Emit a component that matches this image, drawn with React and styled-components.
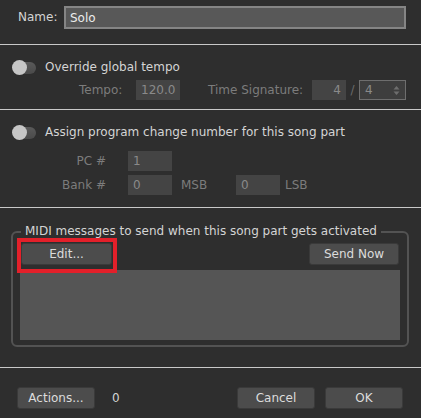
import React from "react";
import styled, { createGlobalStyle } from "styled-components";

const GlobalStyle = createGlobalStyle`
  html, body {
    margin: 0;
    padding: 0;
    background: #2e2e2e;
  }
  body {
    font-family: "DejaVu Sans", Verdana, sans-serif;
    font-size: 12px;
    color: #d4d4d4;
  }
`;

export default function App() {
  return (
    <>
      <GlobalStyle />
      <Dialog>
        <NameRow>
          <Label>Name:</Label>
          <NameInput defaultValue="Solo" />
        </NameRow>
        <Divider />

        <Section $height={64}>
          <ToggleRow>
            <Toggle />
            <span>Override global tempo</span>
          </ToggleRow>
          <FieldRow $left={79} $top={5}>
            <DimLabel $width={57}>Tempo:</DimLabel>
            <DimInput $width={44}>120.0</DimInput>
            <DimLabel $width={104} $gap={28}>Time Signature:</DimLabel>
            <DimInput $width={34} $right>4</DimInput>
            <Slash>/</Slash>
            <Spinner>
              4
              <svg width="7" height="11" viewBox="0 0 7 11">
                <path d="M3.5 1 L6.5 4.5 H0.5 Z" fill="#6e6e6e" />
                <path d="M3.5 10 L6.5 6.5 H0.5 Z" fill="#6e6e6e" />
              </svg>
            </Spinner>
          </FieldRow>
        </Section>
        <Divider />

        <Section $height={97}>
          <ToggleRow>
            <Toggle />
            <span>Assign program change number for this song part</span>
          </ToggleRow>
          <FieldRow $top={11}>
            <PcLabel>PC #</PcLabel>
            <DimInput $width={44}>1</DimInput>
          </FieldRow>
          <FieldRow $top={4}>
            <PcLabel>Bank #</PcLabel>
            <DimInput $width={44}>0</DimInput>
            <DimLabel $width={55} $gap={9}>MSB</DimLabel>
            <DimInput $width={44}>0</DimInput>
            <DimLabel $gap={5}>LSB</DimLabel>
          </FieldRow>
        </Section>
        <Divider />

        <Group>
          <Legend>MIDI messages to send when this song part gets activated</Legend>
          <GroupBar>
            <Button $width={91}>
              Edit...
              <Highlight />
            </Button>
            <Button $width={90}>Send Now</Button>
          </GroupBar>
          <MessageList />
        </Group>
        <Divider />

        <Footer>
          <Button $width={78}>Actions...</Button>
          <Count>0</Count>
          <Spacer />
          <Button $width={78}>Cancel</Button>
          <Button $width={78}>OK</Button>
        </Footer>
      </Dialog>
    </>
  );
}

const Dialog = styled.div`
  width: 421px;
  height: 418px;
  display: flex;
  flex-direction: column;
  background: #2e2e2e;
  overflow: hidden;
`;
const NameRow = styled.div`
  height: 44px;
  box-sizing: border-box;
  padding: 6px 15px 0 18px;
  display: flex;
  align-items: flex-start;
`;
const Label = styled.span`
  width: 46px;
  line-height: 23px;
  color: #d4d4d4;
`;
const NameInput = styled.input`
  flex: 1;
  height: 23px;
  box-sizing: border-box;
  border: 2px solid #858585;
  background: #585858;
  color: #ececec;
  font: inherit;
  padding: 0 4px;
  outline: none;
`;
const Divider = styled.div`
  height: 1px;
  flex-shrink: 0;
  background: #c9c9c9;
`;
const Section = styled.div`
  height: ${(p) => p.$height}px;
  flex-shrink: 0;
  box-sizing: border-box;
  padding-top: 14px;
  display: flex;
  flex-direction: column;
`;
const ToggleRow = styled.div`
  display: flex;
  align-items: center;
  gap: 9px;
  height: 16px;
  padding-left: 12px;
  color: #d4d4d4;
`;
const Toggle = styled.span`
  position: relative;
  width: 24px;
  height: 15px;
  &::before {
    content: "";
    position: absolute;
    left: 4px;
    right: 0;
    top: 2px;
    bottom: 1px;
    border-radius: 6px;
    background: linear-gradient(#5a5a5a, #4a4a4a);
  }
  &::after {
    content: "";
    position: absolute;
    left: 0;
    top: 0;
    width: 15px;
    height: 15px;
    border-radius: 50%;
    background: #c6c6c6;
  }
`;
const FieldRow = styled.div`
  display: flex;
  align-items: center;
  height: 20px;
  margin-top: ${(p) => p.$top}px;
  padding-left: ${(p) => p.$left || 0}px;
`;
const DimLabel = styled.span`
  color: #7c7c7c;
  ${(p) => (p.$width ? `width: ${p.$width}px;` : "")}
  ${(p) => (p.$gap ? `margin-left: ${p.$gap}px;` : "")}
`;
const DimInput = styled.span`
  width: ${(p) => p.$width}px;
  height: 20px;
  box-sizing: border-box;
  background: #444444;
  color: #8a8a8a;
  line-height: 20px;
  padding: 0 5px;
  text-align: ${(p) => (p.$right ? "right" : "left")};
`;
const Slash = styled.span`
  width: 13px;
  text-align: center;
  color: #6a6a6a;
`;
const Spinner = styled.span`
  width: 47px;
  height: 20px;
  box-sizing: border-box;
  border: 1px solid #6e6e6e;
  background: #3e3e3e;
  color: #8a8a8a;
  display: flex;
  align-items: center;
  justify-content: space-between;
  padding: 0 5px;
`;
const PcLabel = styled.span`
  width: 106px;
  margin-right: 22px;
  color: #7c7c7c;
  text-align: right;
`;
const Group = styled.fieldset`
  margin: 16px 12px 20px 11px;
  padding: 0 7px 5px 7px;
  border: 2px solid #535353;
  border-radius: 6px;
  min-width: 0;
`;
const Legend = styled.legend`
  padding: 0 4px;
  margin-left: 1px;
  color: #d4d4d4;
  line-height: 15px;
`;
const GroupBar = styled.div`
  display: flex;
  justify-content: space-between;
  margin-top: 4px;
  padding: 0 1px;
`;
const Button = styled.button`
  position: relative;
  width: ${(p) => p.$width}px;
  height: 22px;
  box-sizing: border-box;
  background: #4c4c4c;
  border: 1px solid #3a3a3a;
  border-radius: 3px;
  color: #dcdcdc;
  font: inherit;
  padding: 0;
`;
const Highlight = styled.span`
  position: absolute;
  left: -5px;
  top: -6px;
  width: 100px;
  height: 35px;
  box-sizing: border-box;
  border: 4px solid #e3202a;
  pointer-events: none;
`;
const MessageList = styled.div`
  height: 70px;
  margin-top: 5px;
  background: #555555;
`;
const Footer = styled.div`
  display: flex;
  align-items: center;
  gap: 10px;
  padding: 19px 18px 0 17px;
`;
const Count = styled.span`
  margin-left: 7px;
  color: #d4d4d4;
`;
const Spacer = styled.span`
  flex: 1;
`;
